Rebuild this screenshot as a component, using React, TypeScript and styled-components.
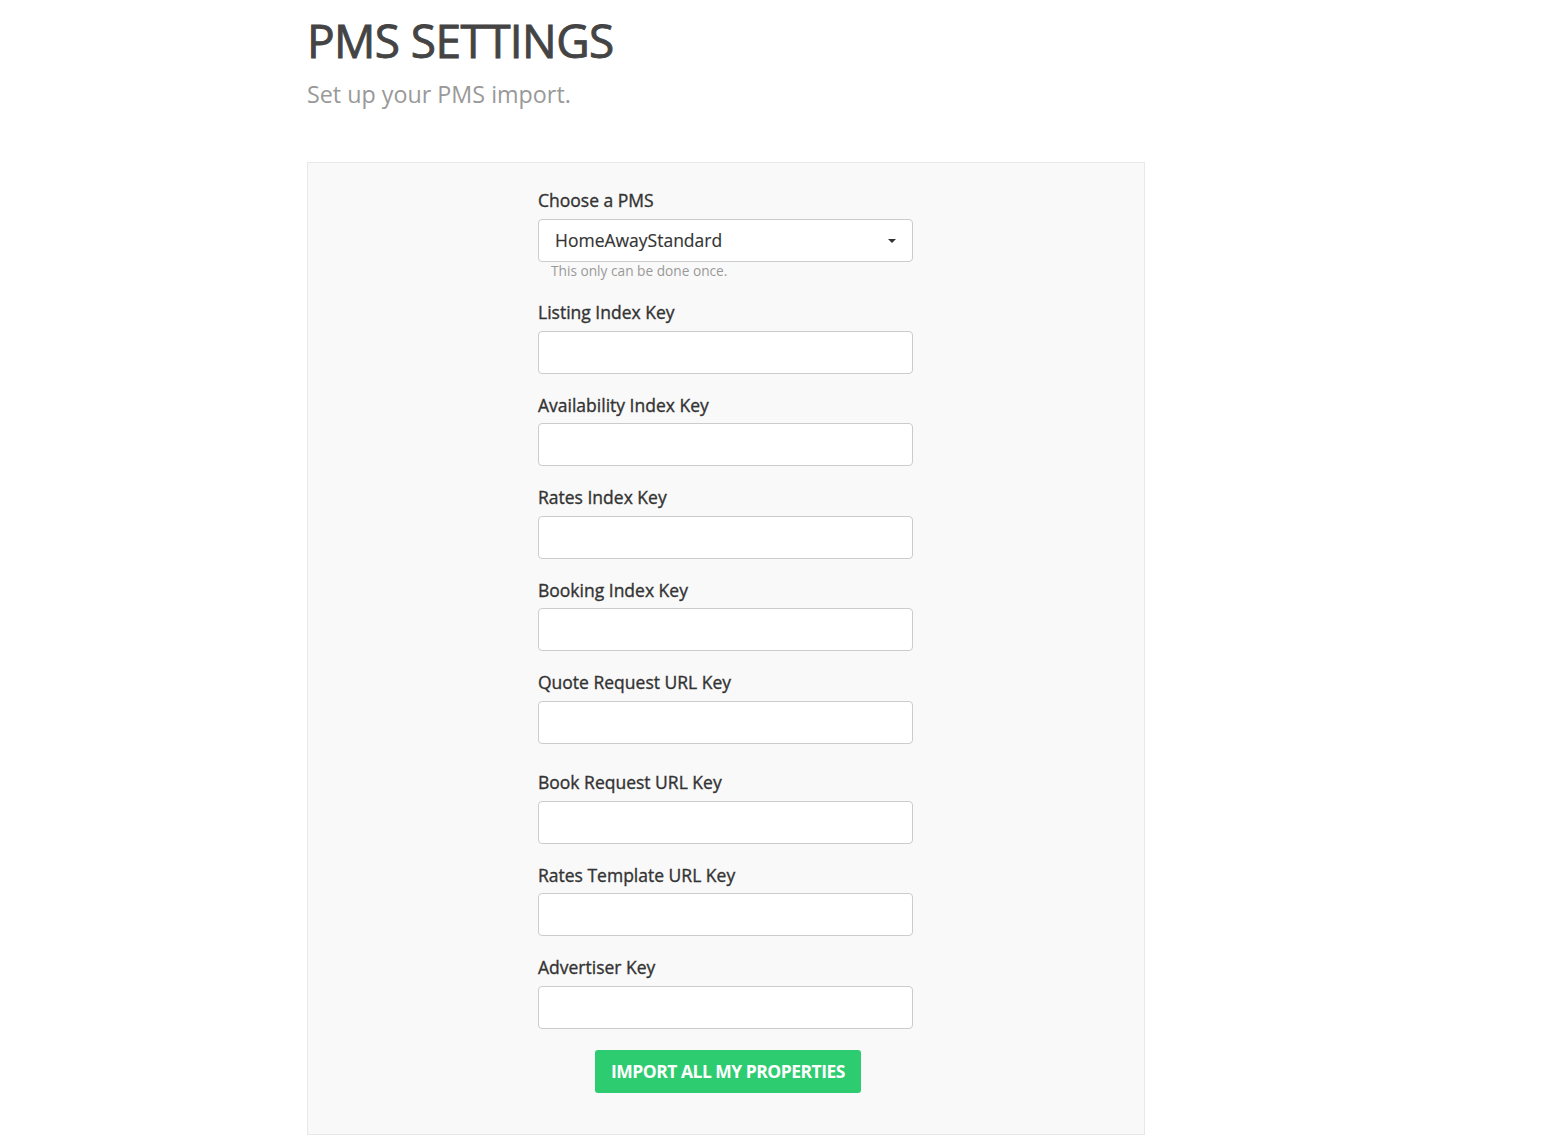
import React, { useState } from 'react'
import styled, { createGlobalStyle } from 'styled-components';

const GlobalStyle = createGlobalStyle`
  html, body {
    margin: 0;
    padding: 0;
    background: #fff;
    font-family: "Open Sans", "Noto Sans", sans-serif;
  }
`

const fields = [
    { id: 'listing_index_key', label: 'Listing Index Key' },
    { id: 'availability_index_key', label: 'Availability Index Key' },
    { id: 'rates_index_key', label: 'Rates Index Key' },
    { id: 'booking_index_key', label: 'Booking Index Key' },
    { id: 'quote_request_url_key', label: 'Quote Request URL Key', extra: true },
    { id: 'book_request_url_key', label: 'Book Request URL Key' },
    { id: 'rates_template_url_key', label: 'Rates Template URL Key' },
    { id: 'advertiser_key', label: 'Advertiser Key' },
];

function App() {

    const [pms, setPms] = useState('HomeAwayStandard');
    const [values, setValues] = useState<Record<string, string>>({});

    return (
        <>
        <GlobalStyle />
        <Page>
            <Title>PMS SETTINGS</Title>
            <Subtitle>Set up your PMS import.</Subtitle>
            <Panel>
                <Form onSubmit={(event: any) => { event.preventDefault() }}>
                    <Group>
                        <Label htmlFor='pms'>Choose a PMS</Label>
                        <SelectWrapper>
                            <Select id='pms' value={pms} onChange={(e) => { setPms(e.currentTarget.value) }}>
                                <option value='HomeAwayStandard'>HomeAwayStandard</option>
                                <option value='Other'>Other</option>
                            </Select>
                            <Caret />
                        </SelectWrapper>
                        <Help>This only can be done once.</Help>
                    </Group>
                    {fields.map((f) => (
                        <Group key={f.id} $extra={f.extra}>
                            <Label htmlFor={f.id}>{f.label}</Label>
                            <Input type='text' id={f.id} name={f.id}
                                value={values[f.id] || ''}
                                onChange={(e) => { setValues({ ...values, [f.id]: e.currentTarget.value }) }} />
                        </Group>
                    ))}
                    <ButtonWrapper>
                        <Button type='submit'>Import all my properties</Button>
                    </ButtonWrapper>
                </Form>
            </Panel>
        </Page>
        </>
    )
}

export default App;

const Page = styled.div`
padding: 14px 0 8px 307px;
width: 838px;
`

const Title = styled.h1`
margin: 0;
font-size: 46px;
line-height: 53px;
font-weight: 400;
color: #444;
-webkit-text-stroke: 0.9px #444;
letter-spacing: -0.6px;
`

const Subtitle = styled.p`
margin: 12px 0 0 0;
font-size: 23.3px;
line-height: 30px;
color: #999;
`

const Panel = styled.div`
margin-top: 53px;
box-sizing: border-box;
width: 838px;
background: #f9f9f9;
border: 1px solid #e8e8e8;
padding: 25px 1px 41px 0;
display: flex;
justify-content: center;
`

const Form = styled.form`
width: 375px;
display: flex;
flex-direction: column;
`

const Group = styled.div<{ $extra?: boolean }>`
display: flex;
flex-direction: column;
margin-bottom: ${(p) => (p.$extra ? '26.5px' : '19px')};
`

const Label = styled.label`
font-size: 17.5px;
font-weight: 400;
line-height: 24px;
color: #333;
-webkit-text-stroke: 0.35px #333;
margin-bottom: 6.5px;
padding-top: 1px;
margin-top: -1px;
`

const SelectWrapper = styled.div`
position: relative;
`

const Select = styled.select`
appearance: none;
width: 100%;
height: 43px;
box-sizing: border-box;
border: 1px solid #ccc;
border-radius: 4px;
background: #fff;
padding: 0 16px;
font-family: "Open Sans", sans-serif;
font-size: 17.5px;
color: #333;
-webkit-text-stroke: 0.15px #333;
outline: none;
`

const Caret = styled.span`
position: absolute;
right: 17px;
top: 20px;
width: 0;
height: 0;
border-left: 4.5px solid transparent;
border-right: 4.5px solid transparent;
border-top: 4.5px solid #333;
pointer-events: none;
`

const Help = styled.span`
font-size: 13.7px;
line-height: 18px;
color: #999;
padding-left: 13px;
margin-bottom: 1.5px;
`

const Input = styled.input`
height: 43px;
box-sizing: border-box;
border: 1px solid #ccc;
border-radius: 4px;
background: #fff;
padding: 0 16px;
font-family: "Open Sans", sans-serif;
font-size: 17px;
outline: none;
`

const ButtonWrapper = styled.div`
display: flex;
justify-content: center;
margin-top: 2px;
padding-left: 5px;
`

const Button = styled.button`
height: 43px;
padding: 0 16px;
border: none;
border-radius: 3px;
background: #2ecc71;
color: #fff;
font-family: "Open Sans", sans-serif;
font-weight: 700;
font-size: 17.5px;
letter-spacing: -0.5px;
text-transform: uppercase;
cursor: pointer;
`
